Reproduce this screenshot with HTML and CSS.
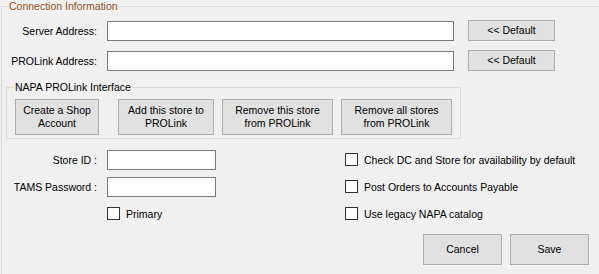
FILE: index.html
```html
<!DOCTYPE html>
<html lang="en">
<head>
    <meta charset="UTF-8">
    <title>Connection Information</title>
    <link rel="stylesheet" href="styles.css">
</head>
<body>
    <fieldset class="group main-group">
        <legend class="main-legend">Connection Information</legend>

        <div class="addr-row first">
            <label class="lbl" for="server">Server Address:</label>
            <input class="txt wide" type="text" id="server">
            <button class="btn def">&lt;&lt; Default</button>
        </div>
        <div class="addr-row">
            <label class="lbl" for="prolink">PROLink Address:</label>
            <input class="txt wide" type="text" id="prolink">
            <button class="btn def">&lt;&lt; Default</button>
        </div>

        <fieldset class="group napa-group">
            <legend class="napa-legend">NAPA PROLink Interface</legend>
            <div class="napa-buttons">
                <button class="btn napa b1">Create a Shop<br>Account</button>
                <button class="btn napa b2">Add this store to<br>PROLink</button>
                <button class="btn napa b3">Remove this store<br>from PROLink</button>
                <button class="btn napa b4">Remove all stores<br>from PROLink</button>
            </div>
        </fieldset>

        <div class="bottom">
            <div class="left-col">
                <div class="field-row">
                    <label class="lbl" for="store">Store ID :</label>
                    <input class="txt short" type="text" id="store">
                </div>
                <div class="field-row second">
                    <label class="lbl" for="tams">TAMS Password :</label>
                    <input class="txt short" type="password" id="tams">
                </div>
                <label class="check primary"><input type="checkbox"> Primary</label>
            </div>
            <div class="right-col">
                <label class="check"><input type="checkbox"> Check DC and Store for availability by default</label>
                <label class="check"><input type="checkbox"> Post Orders to Accounts Payable</label>
                <label class="check"><input type="checkbox"> Use legacy NAPA catalog</label>
                <div class="actions">
                    <button class="btn big">Cancel</button>
                    <button class="btn big">Save</button>
                </div>
            </div>
        </div>
    </fieldset>
</body>
</html>
```

FILE: styles.css
```css
body {
    margin: 0;
    background-color: #f0f0f0;
    font-family: "Liberation Sans", Arial, sans-serif;
    font-size: 10.5px;
    color: #000;
    overflow: hidden;
}
.group {
    border: 1px solid #dcdcdc;
    padding: 0;
    margin: 0;
    min-width: 0;
    box-sizing: border-box;
}
.group legend {
    padding: 0 1px;
    line-height: 13px;
}
.main-group {
    margin-left: 1px;
    width: 598px;
    height: 274px;
    border-right: none;
    border-bottom: none;
}
.main-legend {
    margin-left: 6px;
    color: #94501c;
}
.addr-row {
    display: flex;
    align-items: center;
    margin-top: 9px;
    height: 21px;
}
.addr-row.first {
    margin-top: 7px;
}
.lbl {
    width: 95px;
    text-align: right;
    margin-right: 10px;
    flex: none;
}
.txt {
    height: 20px;
    box-sizing: border-box;
    border: 1px solid #7a7a7a;
    background: #fff;
    margin: 0;
    padding: 1px 3px;
    font: inherit;
}
.txt.wide {
    width: 347px;
    margin-top: 1px;
}
.txt.short {
    width: 109px;
}
.btn {
    background-color: #e1e1e1;
    border: 1px solid #adadad;
    color: #000;
    font: inherit;
    line-height: 13px;
    padding: 0;
    margin: 0;
    box-sizing: border-box;
}
.btn.def {
    width: 87px;
    height: 21px;
    margin-left: 14px;
}
.napa-group {
    margin: 10px 0 0 4px;
    width: 455px;
}
.napa-legend {
    margin-left: 7px;
}
.napa-buttons {
    display: flex;
    padding: 5px 0 3px 8px;
    gap: 8px;
}
.btn.napa {
    height: 36px;
}
.b1 { width: 84px; margin-right: 11px; }
.b2 { width: 96px; }
.b3 { width: 111px; }
.b4 { width: 111px; }
.bottom {
    display: flex;
    padding-top: 11px;
}
.left-col {
    width: 343px;
    flex: none;
}
.field-row {
    display: flex;
    align-items: center;
}
.field-row.second {
    margin-top: 7px;
}
.check {
    display: flex;
    align-items: center;
    height: 13px;
}
.check input {
    appearance: none;
    width: 13px;
    height: 13px;
    margin: 0 6px 0 0;
    border: 1px solid #333;
    background: #fff;
    box-sizing: border-box;
}
.check.primary {
    margin: 10px 0 0 105px;
}
.right-col {
    padding-top: 3px;
}
.right-col .check {
    margin-bottom: 14px;
}
.actions {
    display: flex;
    gap: 8px;
    margin-left: 78px;
}
.btn.big {
    width: 79px;
    height: 31px;
}
```
